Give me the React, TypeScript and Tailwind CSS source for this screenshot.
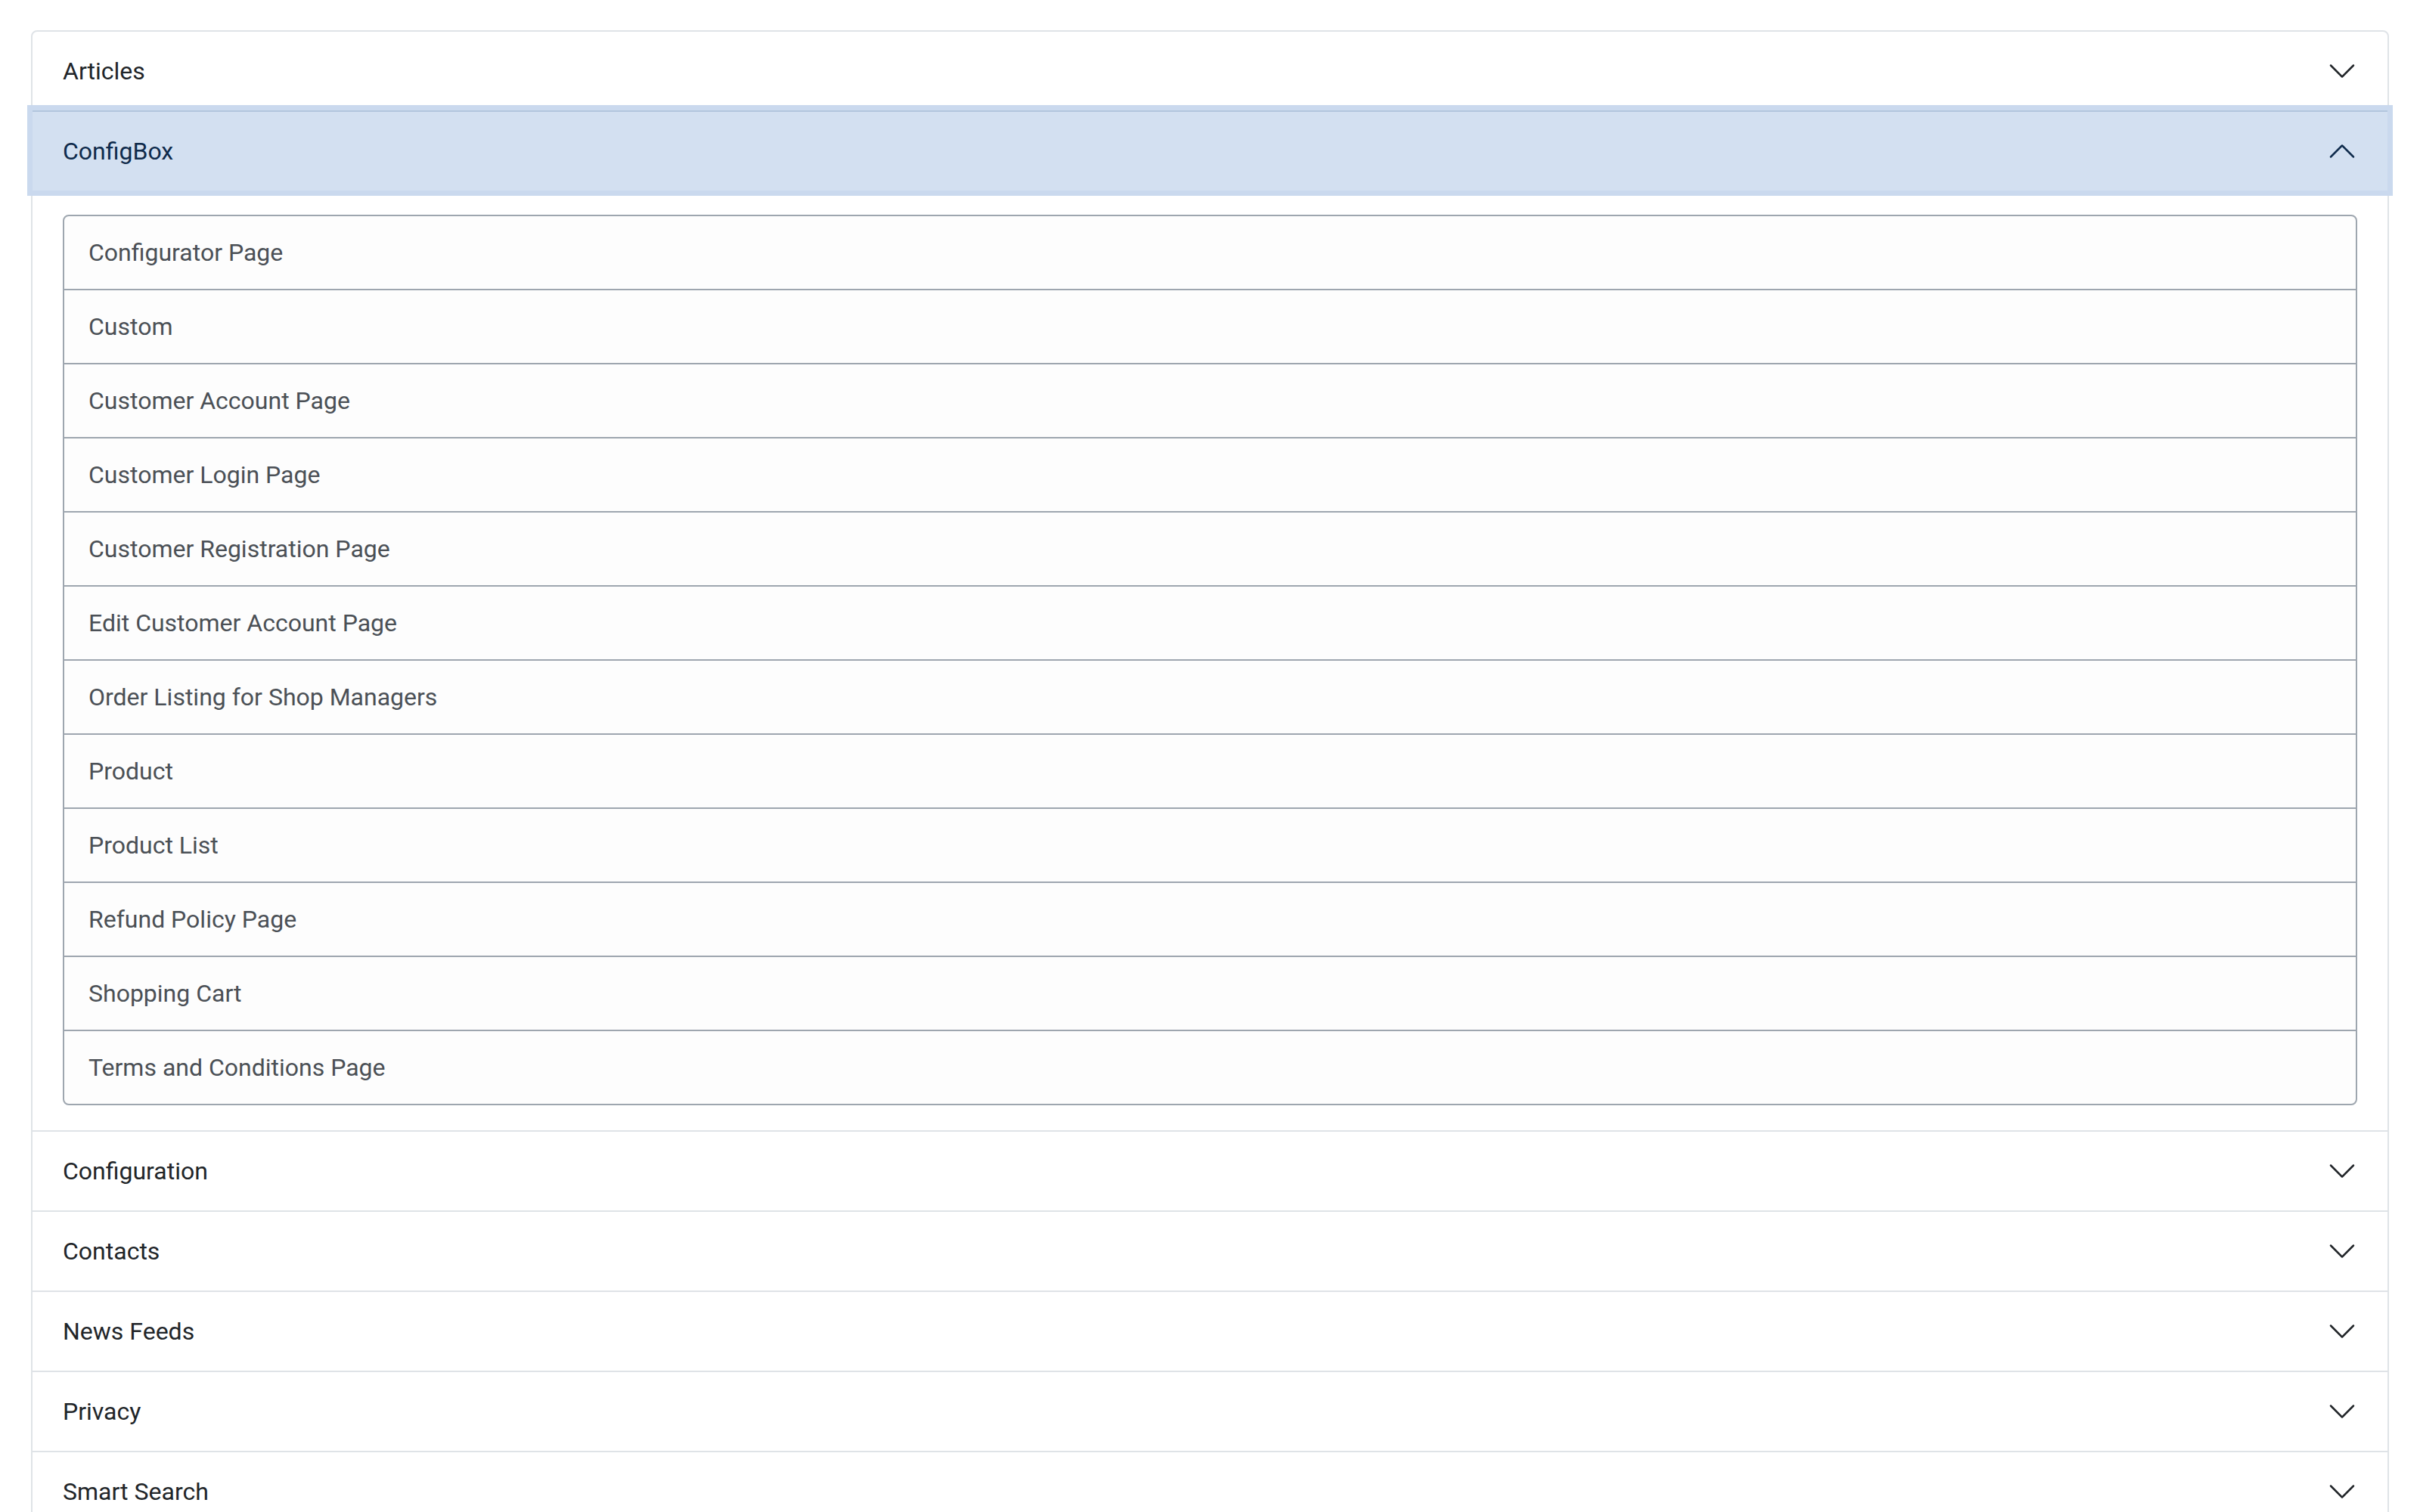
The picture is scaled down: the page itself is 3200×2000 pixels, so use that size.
import React from 'react';

// Accordion of menu-item types; ConfigBox is open and focused.
const sections = ['Articles', 'ConfigBox', 'Configuration', 'Contacts', 'News Feeds', 'Privacy', 'Smart Search'];

const configBoxItems = [
  'Configurator Page',
  'Custom',
  'Customer Account Page',
  'Customer Login Page',
  'Customer Registration Page',
  'Edit Customer Account Page',
  'Order Listing for Shop Managers',
  'Product',
  'Product List',
  'Refund Policy Page',
  'Shopping Cart',
  'Terms and Conditions Page',
];

const Chevron: React.FC<{ up?: boolean }> = ({ up }) => (
  <svg width="40" height="40" viewBox="0 0 16 16" fill="currentColor" aria-hidden="true">
    {up ? (
      <path d="M7.646 4.646a.5.5 0 0 1 .708 0l6 6a.5.5 0 0 1-.708.708L8 5.707l-5.646 5.647a.5.5 0 0 1-.708-.708l6-6z" />
    ) : (
      <path d="M1.646 4.646a.5.5 0 0 1 .708 0L8 10.293l5.646-5.647a.5.5 0 0 1 .708.708l-6 6a.5.5 0 0 1-.708 0l-6-6a.5.5 0 0 1 0-.708z" />
    )}
  </svg>
);

export default function App() {
  const open = 'ConfigBox';

  return (
    <div className="min-h-screen bg-white px-[41px] pt-[40px] font-['Roboto',sans-serif]">
      <div className="rounded-lg border-2 border-[#dfe3e7] bg-white">
        {sections.map((name, i) => {
          const isOpen = name === open;
          if (isOpen) {
            return (
              <div key={name}>
                <button
                  type="button"
                  className="relative z-10 flex h-[106px] w-full items-center justify-between border-t-2 border-[#b3c6de] bg-[#d3e0f1] px-[40px] text-left text-[32px] text-[#0f2b4c] shadow-[0_0_0_7px_#cad9ee]"
                >
                  <span>{name}</span>
                  <Chevron up />
                </button>
                <div className="px-[40px] pt-[32px] pb-[33px]">
                  <ul className="rounded-lg border-2 border-[#9ea6af] bg-[#fdfdfd]">
                    {configBoxItems.map((item, j) => (
                      <li
                        key={item}
                        className={
                          j < configBoxItems.length - 1
                            ? 'flex h-[98px] items-center border-b-2 border-[#9ea6af] px-[32px] text-[32px] text-[#4b5056]'
                            : 'flex h-[96px] items-center px-[32px] text-[32px] text-[#4b5056]'
                        }
                      >
                        {item}
                      </li>
                    ))}
                  </ul>
                </div>
              </div>
            );
          }
          return (
            <button
              key={name}
              type="button"
              className={
                i === 0
                  ? 'flex h-[104px] w-full items-center justify-between px-[40px] text-left text-[32px] text-[#212529]'
                  : 'flex h-[106px] w-full items-center justify-between border-t-2 border-[#dfe3e7] px-[40px] text-left text-[32px] text-[#212529]'
              }
            >
              <span>{name}</span>
              <Chevron />
            </button>
          );
        })}
      </div>
    </div>
  );
}
